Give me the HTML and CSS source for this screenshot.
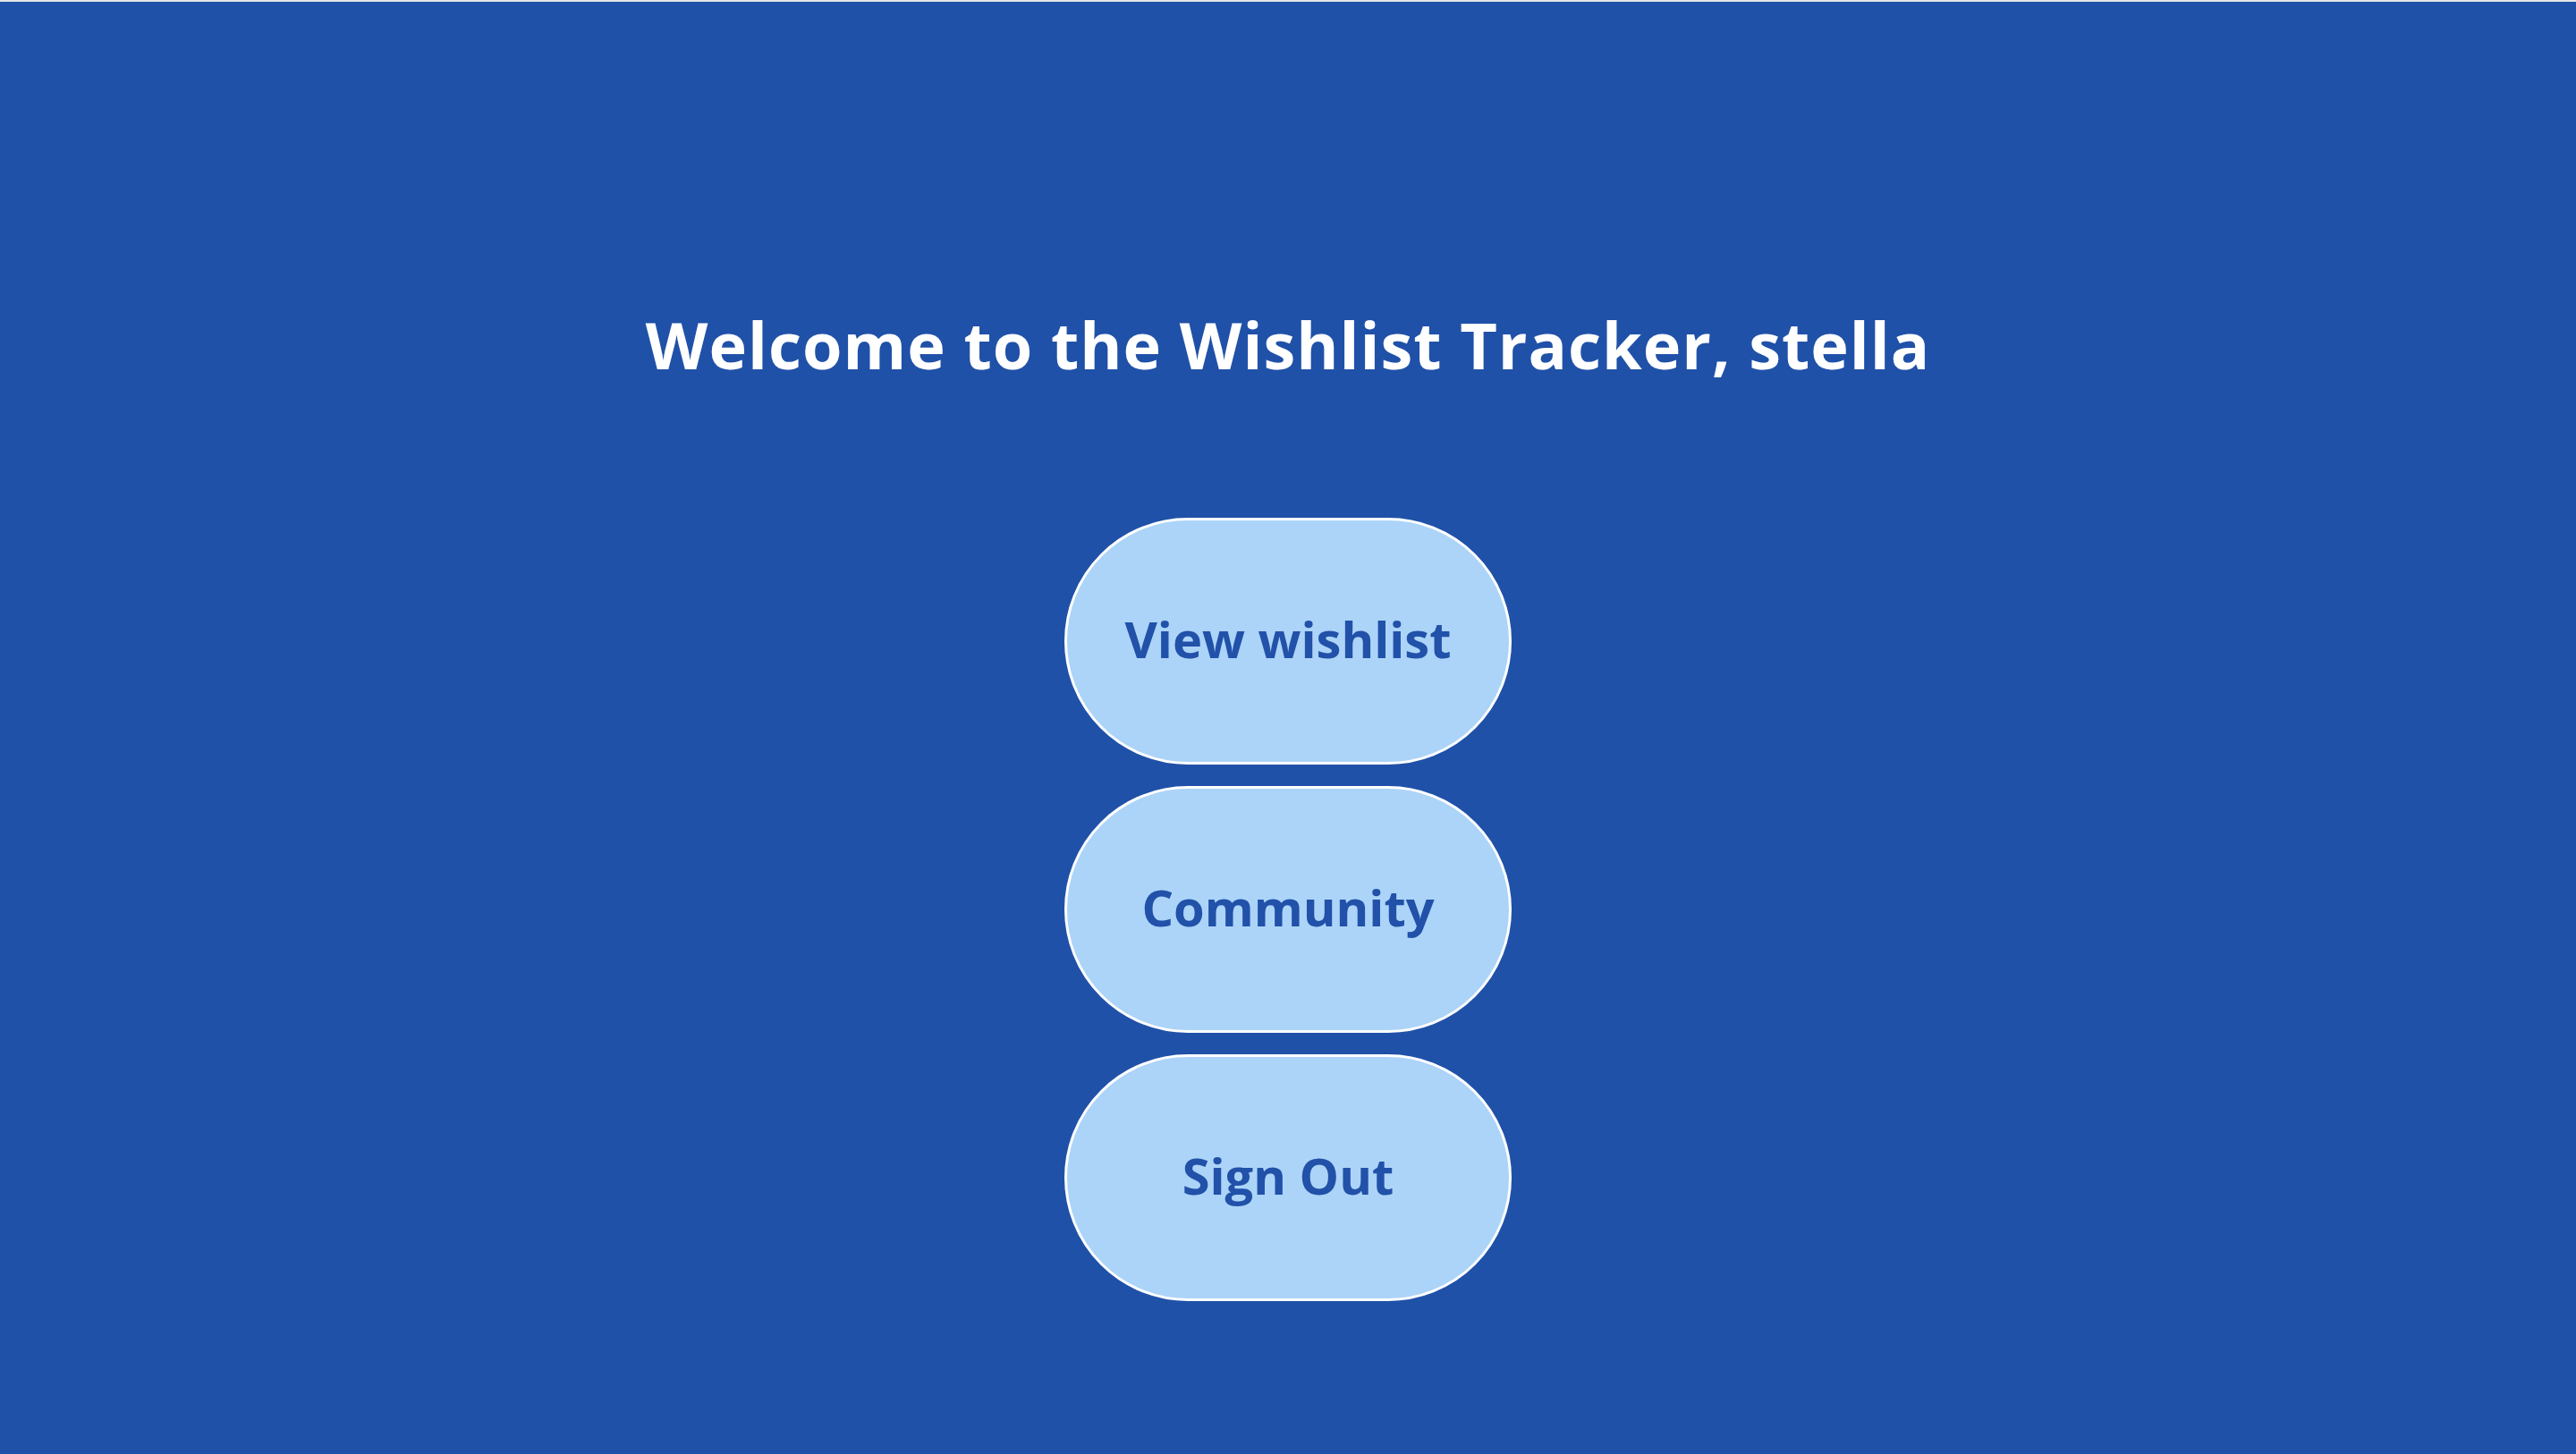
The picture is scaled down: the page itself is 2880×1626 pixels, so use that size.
FILE: index.html
```html
<!DOCTYPE html>
<html lang="en">
<head>
<meta charset="utf-8">
<title>Wishlist Tracker</title>
<link rel="stylesheet" href="styles.css">
</head>
<body>
<main class="page">
  <h1 class="title">Welcome to the Wishlist Tracker, stella</h1>
  <nav class="menu">
    <button class="pill">View wishlist</button>
    <button class="pill">Community</button>
    <button class="pill">Sign Out</button>
  </nav>
</main>
</body>
</html>
```
FILE: styles.css
```css
html, body {
  margin: 0;
  padding: 0;
  height: 100%;
}
body {
  background: #2051a8;
  font-family: "Open Sans", "Lato", sans-serif;
}
.page {
  box-sizing: border-box;
  min-height: 100vh;
  border-top: 2px solid #e6e6e6;
  background: #2051a8;
  display: flex;
  flex-direction: column;
  align-items: center;
  padding-top: 347px;
}
.title {
  margin: 0;
  color: #ffffff;
  font-size: 72px;
  line-height: 72px;
  font-weight: 700;
  letter-spacing: 1px;
}
.menu {
  margin-top: 158px;
  display: flex;
  flex-direction: column;
  align-items: center;
  gap: 24px;
}
.pill {
  box-sizing: border-box;
  width: 500px;
  height: 276px;
  border: 3px solid #ffffff;
  border-radius: 138px;
  background: #acd4f8;
  color: #2151a8;
  font-family: "Open Sans", "Lato", sans-serif;
  font-size: 56px;
  font-weight: 700;
  padding: 0 0 6px 0;
  cursor: pointer;
}
```
